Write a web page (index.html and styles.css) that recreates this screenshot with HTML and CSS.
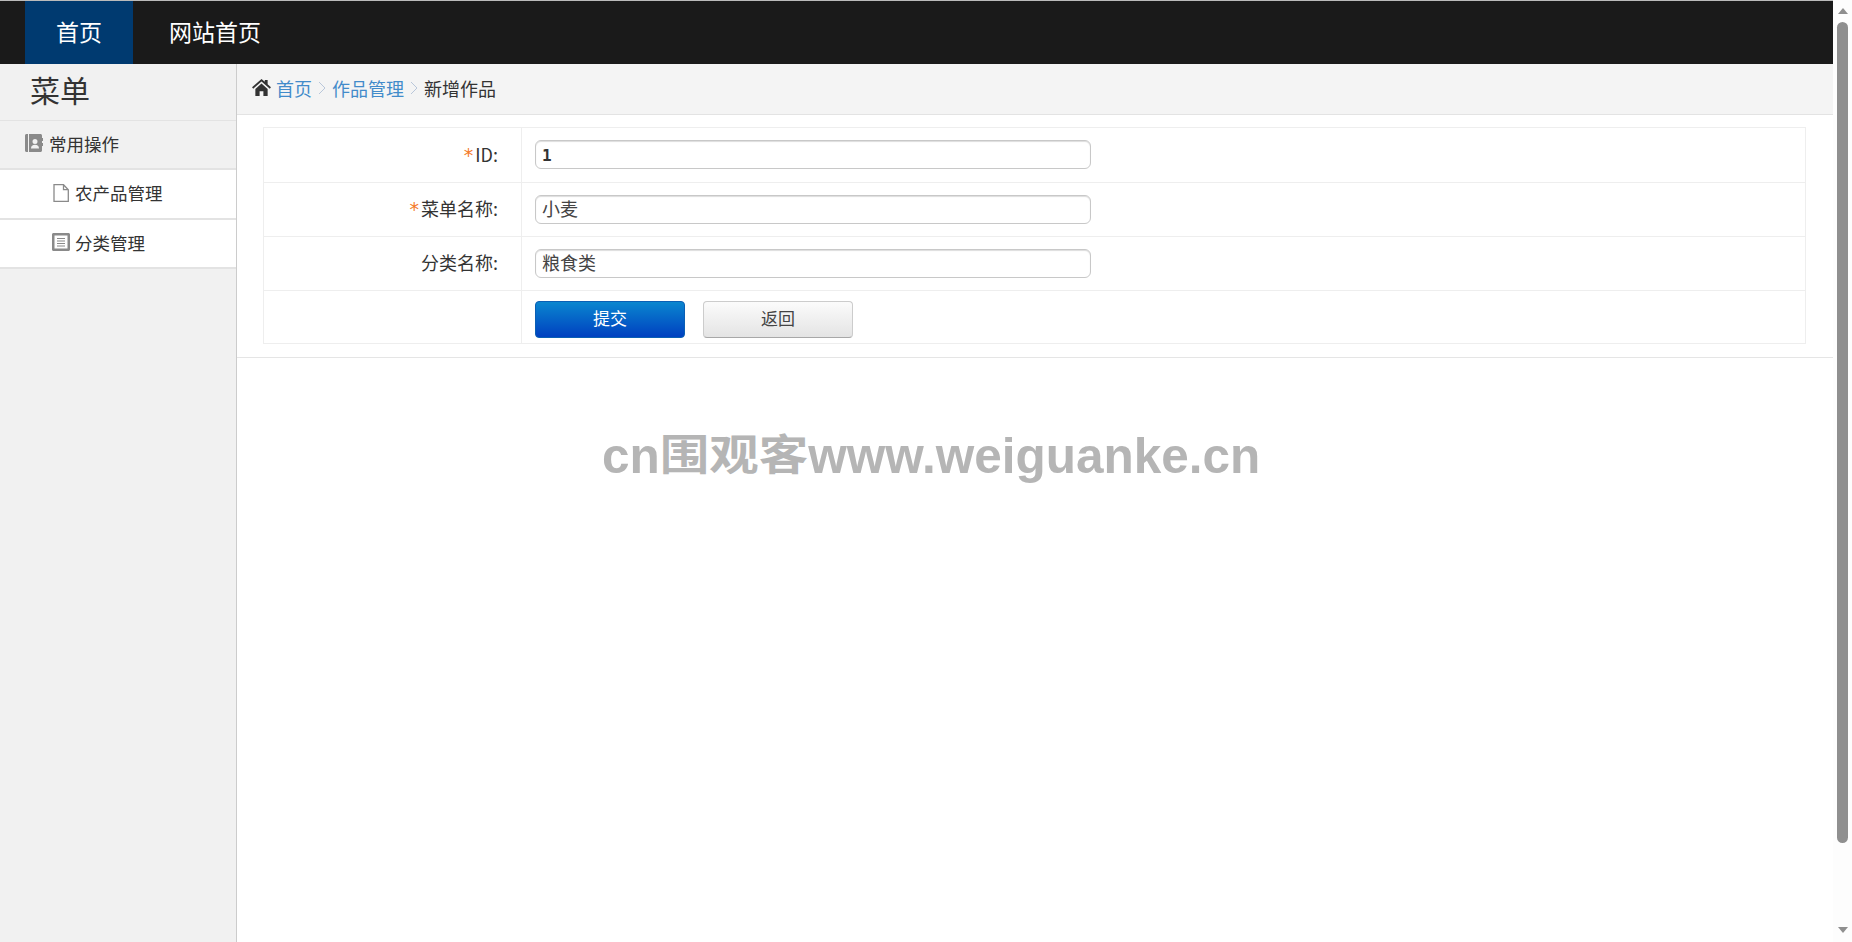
FILE: index.html
```html
<!DOCTYPE html>
<html lang="zh-CN">

<head>
    <meta charset="UTF-8">
    <title>新增作品</title>
    <link rel="stylesheet" href="styles.css">
</head>

<body>
    <div class="page">
        <!-- Top bar -->
        <div class="topbar">
            <a class="nav-item active">首页</a>
            <a class="nav-item">网站首页</a>
        </div>

        <div class="main">
            <!-- Sidebar -->
            <div class="sidebar">
                <div class="side-title">菜单</div>
                <div class="side-group">
                    <svg class="icon" viewBox="0 0 18 18"><path fill="#8a8a8a" d="M0 1.500C0 .7.7 0 1.500 0H3v18H1.500C.7 18 0 17.300 0 16.500zM4 0h11.500c.8 0 1.500.7 1.500 1.500V4h1v3h-1v2h1v3h-1v4.500c0 .8-.7 1.500-1.500 1.500H4zm6 5a2.500 2.500 0 1 0 0 5 2.500 2.500 0 0 0 0-5zm-4 9.500h8c0-2.500-1.500-3.700-4-3.700s-4 1.200-4 3.700z"/></svg>
                    <span>常用操作</span>
                </div>
                <div class="side-link">
                    <svg class="icon" viewBox="0 0 18 18"><path fill="#fff" stroke="#8a8a8a" stroke-width="1.300" d="M2 .7h9.500l4.800 5v11.600H2zM11.500.7v5h4.800"/></svg>
                    <span>农产品管理</span>
                </div>
                <div class="side-link">
                    <svg class="icon" viewBox="0 0 18 18"><path fill="#8a8a8a" d="M1.500 0h15c.8 0 1.500.7 1.500 1.500v15c0 .8-.7 1.500-1.500 1.500h-15C.7 18 0 17.300 0 16.500v-15C0 .7.700 0 1.500 0zM2.500 2.500v13h13v-13z"/><path stroke="#8a8a8a" stroke-width="1.200" d="M5 5.500h8M5 8h8M5 10.500h8M5 13h8"/></svg>
                    <span>分类管理</span>
                </div>
            </div>

            <!-- Content -->
            <div class="content">
                <div class="breadcrumb">
                    <svg class="home" viewBox="0 0 20 18"><path fill="#333" d="M10 0l3.500 3V1h3v4.600L20 8.800l-1.200 1.400L10 2.600 1.200 10.200 0 8.800zM3.500 10.500L10 4.800l6.500 5.700V18H12v-5H8v5H3.500z"/></svg>
                    <a class="crumb-link">首页</a>
                    <svg class="sep" viewBox="0 0 8 14"><path fill="none" stroke="#b9c7da" d="M1 1l6 6-6 6"/></svg>
                    <a class="crumb-link">作品管理</a>
                    <svg class="sep" viewBox="0 0 8 14"><path fill="none" stroke="#b9c7da" d="M1 1l6 6-6 6"/></svg>
                    <span>新增作品</span>
                </div>

                <div class="form-panel">
                    <table class="form-table">
                        <tr class="row-first">
                            <td class="label"><span class="req">*</span>ID:</td>
                            <td><input class="field field-id" type="text" value="1"></td>
                        </tr>
                        <tr>
                            <td class="label"><span class="req">*</span>菜单名称:</td>
                            <td><input class="field" type="text" value="小麦"></td>
                        </tr>
                        <tr>
                            <td class="label">分类名称:</td>
                            <td><input class="field" type="text" value="粮食类"></td>
                        </tr>
                        <tr class="row-last">
                            <td></td>
                            <td>
                                <div class="actions">
                                    <button class="btn btn-primary" type="button">提交</button>
                                    <button class="btn btn-default" type="button">返回</button>
                                </div>
                            </td>
                        </tr>
                    </table>
                </div>
            </div>
        </div>

        <div class="watermark">cn<span class="wm-cjk">围观客</span>www.weiguanke.cn</div>
    </div>

    <!-- Scrollbar -->
    <div class="scrollbar">
        <div class="arrow arrow-up"></div>
        <div class="thumb"></div>
        <div class="arrow arrow-down"></div>
    </div>
</body>

</html>
```

FILE: styles.css
```css
/* Base styling */
html, body {
    height: 100%;
}

body {
    margin: 0;
    display: flex;
    overflow: hidden;
    font-family: "Noto Sans CJK SC", "Liberation Sans", sans-serif;
    font-size: 18px;
    color: #333;
    background-color: #fff;
}

.page {
    flex: 1;
    min-width: 0;
    display: flex;
    flex-direction: column;
    position: relative;
}

/* Top bar */
.topbar {
    height: 63px;
    flex: none;
    display: flex;
    padding-left: 25px;
    background-color: #1a1a1a;
    border-top: 1px solid #bbb;
}

.nav-item {
    width: 108px;
    line-height: 60px;
    text-align: center;
    font-size: 23px;
    color: #fff;
}

.nav-item.active {
    background-color: #003a70;
}

.nav-item + .nav-item {
    width: 164px;
}

.main {
    flex: 1;
    display: flex;
}

/* Sidebar */
.sidebar {
    width: 236px;
    flex: none;
    background-color: #f1f1f1;
    border-right: 1px solid #ccc;
}

.side-title {
    height: 56px;
    line-height: 50px;
    padding-left: 30px;
    font-size: 30px;
    border-bottom: 1px solid #e3e3e3;
}

.side-group {
    height: 47px;
    display: flex;
    align-items: center;
    gap: 6px;
    padding-left: 25px;
    font-size: 17.500px;
    border-bottom: 2px solid #e3e3e3;
}

.side-link {
    height: 48px;
    display: flex;
    align-items: center;
    gap: 5px;
    padding-left: 52px;
    font-size: 17.500px;
    background-color: #fff;
    border-bottom: 2px solid #e3e3e3;
}

.side-link:last-child {
    height: 47px;
}

.side-group span, .side-link span {
    margin-bottom: 3px;
}

.icon {
    width: 18px;
    height: 18px;
    flex: none;
    margin-bottom: 3px;
}

/* Breadcrumb */
.content {
    flex: 1;
    min-width: 0;
}

.breadcrumb {
    height: 48px;
    display: flex;
    align-items: center;
    padding: 0 0 2px 15px;
    background-color: #f4f4f4;
    border-bottom: 1px solid #e3e3e3;
}

.home {
    width: 19px;
    height: 17px;
    margin-right: 5px;
    margin-bottom: 2px;
}

.crumb-link {
    color: #428bca;
}

.sep {
    width: 8px;
    height: 14px;
    margin: 0 6px;
}

/* Form */
.form-panel {
    padding: 12px 27px 13px 26px;
    border-bottom: 1px solid #e5e5e5;
}

.form-table {
    width: 100%;
    border-collapse: collapse;
}

.form-table td {
    height: 54px;
    padding: 0 0 0 13px;
    border: 1px solid #eee;
    box-sizing: border-box;
}

.form-table .row-first td {
    height: 55px;
    padding-bottom: 1px;
}

.form-table .row-last td {
    height: 53px;
}

.form-table td.label {
    width: 258px;
    padding: 0 23px 3px 0;
    text-align: right;
}

.req {
    margin-right: 2px;
    font-family: "DejaVu Sans", sans-serif;
    font-size: 19px;
    color: #f47a2a;
}

.field {
    display: block;
    width: 556px;
    height: 29px;
    box-sizing: border-box;
    padding: 0 6px 3px 6px;
    border: 1px solid #c8c8c8;
    border-radius: 6px;
    box-shadow: inset 0 1px 1px #ddd;
    font-family: "Noto Sans CJK SC", "Liberation Sans", sans-serif;
    font-size: 18px;
    color: #444;
}

.field-id {
    padding: 2px 6px 0 6px;
    font-family: "DejaVu Sans Mono", monospace;
    font-size: 16px;
    font-weight: bold;
    color: #333;
}

.actions {
    display: flex;
    gap: 18px;
    padding-top: 4px;
}

.btn {
    width: 150px;
    height: 37px;
    padding: 0 0 3px 0;
    border-radius: 4px;
    font-family: "Noto Sans CJK SC", "Liberation Sans", sans-serif;
    font-size: 17px;
}

.btn-primary {
    color: #fff;
    border: 1px solid #0a5fb4;
    background: linear-gradient(#0a86cf, #0040c0);
}

.btn-default {
    color: #444;
    border: 1px solid #ccc;
    border-bottom-color: #a8a8a8;
    background: linear-gradient(#fbfbfb, #e4e4e4);
}

/* Watermark over the page */
.watermark {
    position: absolute;
    left: 602px;
    top: 422px;
    font-family: "Liberation Sans", sans-serif;
    font-size: 49.500px;
    font-weight: 700;
    line-height: 60px;
    white-space: nowrap;
    color: #b5b5b5;
}

.wm-cjk {
    display: inline-block;
    font-family: "Noto Sans CJK SC", sans-serif;
    transform: scaleY(0.85);
}

/* Scrollbar */
.scrollbar {
    width: 19px;
    flex: none;
    display: flex;
    flex-direction: column;
    align-items: center;
    padding-top: 8px;
    box-sizing: border-box;
    background-color: #fdfdfd;
}

.thumb {
    width: 11px;
    height: 821px;
    margin-top: 8px;
    margin-bottom: 84px;
    border-radius: 6px;
    background-color: #8f8f8f;
}

.arrow {
    width: 0;
    height: 0;
    border-left: 5px solid transparent;
    border-right: 5px solid transparent;
}

.arrow-up {
    border-bottom: 6px solid #8f8f8f;
}

.arrow-down {
    border-top: 6px solid #8f8f8f;
}
```
